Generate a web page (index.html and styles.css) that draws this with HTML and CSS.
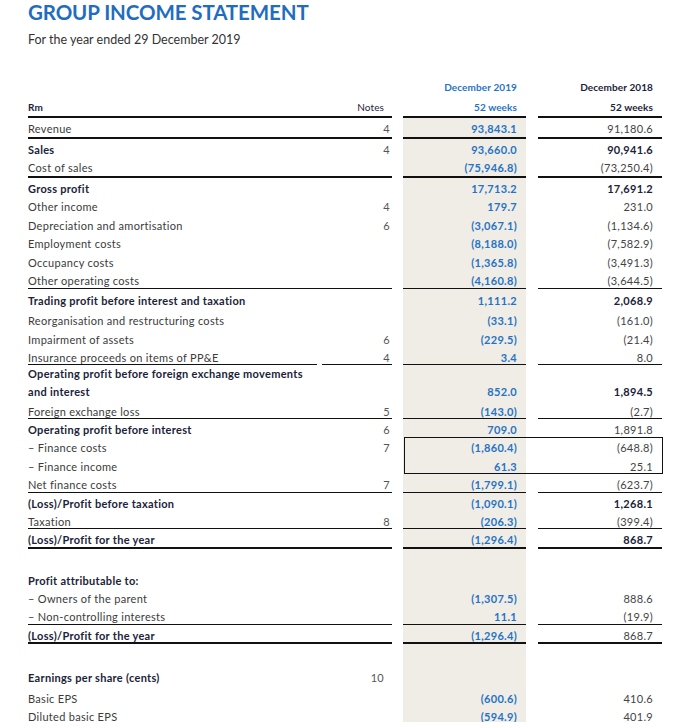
FILE: index.html
```html
<!DOCTYPE html>
<html lang="en">
<head>
<meta charset="utf-8">
<title>Group Income Statement</title>
<link rel="stylesheet" href="styles.css">
</head>
<body>
<div class="page">
  <h1 class="title">GROUP INCOME STATEMENT</h1>
  <p class="sub">For the year ended 29 December 2019</p>

  <div class="stmt">
    <div class="row h1row">
      <div class="lab"></div><div class="note"></div>
      <div class="cur hd">December 2019</div>
      <div class="prev hd">December 2018</div>
    </div>
    <div class="row h2row">
      <div class="lab strong">Rm</div><div class="note hdn">Notes</div>
      <div class="cur hd nobg">52 weeks</div>
      <div class="prev hd">52 weeks</div>
    </div>
    <div class="rule thick"><i class="seg sl"></i><i class="seg sc"></i><i class="seg sp"></i></div>

    <div class="row">
      <div class="lab">Revenue</div><div class="note">4</div>
      <div class="cur">93,843.1</div><div class="prev">91,180.6</div>
    </div>
    <div class="rule thick"><i class="seg sl"></i><i class="seg sc"></i><i class="seg sp"></i></div>
    <div class="row">
      <div class="lab strong">Sales</div><div class="note">4</div>
      <div class="cur">93,660.0</div><div class="prev strong">90,941.6</div>
    </div>
    <div class="row">
      <div class="lab">Cost of sales</div><div class="note"></div>
      <div class="cur">(75,946.8)</div><div class="prev">(73,250.4)</div>
    </div>
    <div class="rule thick"><i class="seg sl"></i><i class="seg sc"></i><i class="seg sp"></i></div>
    <div class="row">
      <div class="lab strong">Gross profit</div><div class="note"></div>
      <div class="cur">17,713.2</div><div class="prev strong">17,691.2</div>
    </div>
    <div class="row">
      <div class="lab">Other income</div><div class="note">4</div>
      <div class="cur">179.7</div><div class="prev">231.0</div>
    </div>
    <div class="row">
      <div class="lab">Depreciation and amortisation</div><div class="note">6</div>
      <div class="cur">(3,067.1)</div><div class="prev">(1,134.6)</div>
    </div>
    <div class="row">
      <div class="lab">Employment costs</div><div class="note"></div>
      <div class="cur">(8,188.0)</div><div class="prev">(7,582.9)</div>
    </div>
    <div class="row">
      <div class="lab">Occupancy costs</div><div class="note"></div>
      <div class="cur">(1,365.8)</div><div class="prev">(3,491.3)</div>
    </div>
    <div class="row pre-thin">
      <div class="lab">Other operating costs</div><div class="note"></div>
      <div class="cur">(4,160.8)</div><div class="prev">(3,644.5)</div>
    </div>
    <div class="rule thin"><i class="seg sl"></i><i class="seg sc"></i><i class="seg sp"></i></div>
    <div class="row trading">
      <div class="lab strong">Trading profit before interest and taxation</div><div class="note"></div>
      <div class="cur">1,111.2</div><div class="prev strong">2,068.9</div>
    </div>
    <div class="row">
      <div class="lab">Reorganisation and restructuring costs</div><div class="note"></div>
      <div class="cur">(33.1)</div><div class="prev">(161.0)</div>
    </div>
    <div class="row">
      <div class="lab">Impairment of assets</div><div class="note">6</div>
      <div class="cur">(229.5)</div><div class="prev">(21.4)</div>
    </div>
    <div class="row ins">
      <div class="lab">Insurance proceeds on items of PP&amp;E</div><div class="note">4</div>
      <div class="cur">3.4</div><div class="prev">8.0</div>
    </div>
    <div class="rule thin"><i class="seg sl1"></i><i class="seg sl2"></i><i class="seg sc"></i><i class="seg sp"></i></div>
    <div class="row tall">
      <div class="lab strong"><span class="two">Operating profit before foreign exchange movements<br>and interest</span></div><div class="note"></div>
      <div class="cur">852.0</div><div class="prev strong">1,894.5</div>
    </div>
    <div class="row pre-thin">
      <div class="lab">Foreign exchange loss</div><div class="note">5</div>
      <div class="cur">(143.0)</div><div class="prev">(2.7)</div>
    </div>
    <div class="rule thin"><i class="seg sl"></i><i class="seg sc"></i><i class="seg sp"></i></div>
    <div class="row opbi">
      <div class="lab strong">Operating profit before interest</div><div class="note">6</div>
      <div class="cur">709.0</div><div class="prev">1,891.8</div>
    </div>
    <div class="boxgrp">
      <div class="row">
        <div class="lab">&ndash; Finance costs</div><div class="note">7</div>
        <div class="cur">(1,860.4)</div><div class="prev">(648.8)</div>
      </div>
      <div class="row">
        <div class="lab">&ndash; Finance income</div><div class="note"></div>
        <div class="cur">61.3</div><div class="prev">25.1</div>
      </div>
      <div class="box"></div>
    </div>
    <div class="row pre-thin">
      <div class="lab">Net finance costs</div><div class="note">7</div>
      <div class="cur">(1,799.1)</div><div class="prev">(623.7)</div>
    </div>
    <div class="rule thin"><i class="seg sl"></i><i class="seg sc"></i><i class="seg sp"></i></div>
    <div class="row r18">
      <div class="lab strong">(Loss)/Profit before taxation</div><div class="note"></div>
      <div class="cur">(1,090.1)</div><div class="prev strong">1,268.1</div>
    </div>
    <div class="row pre-thin">
      <div class="lab">Taxation</div><div class="note">8</div>
      <div class="cur">(206.3)</div><div class="prev">(399.4)</div>
    </div>
    <div class="rule thin"><i class="seg sl"></i><i class="seg sc"></i><i class="seg sp"></i></div>
    <div class="row pre-thin">
      <div class="lab strong">(Loss)/Profit for the year</div><div class="note"></div>
      <div class="cur">(1,296.4)</div><div class="prev strong">868.7</div>
    </div>
    <div class="rule thick"><i class="seg sl"></i><i class="seg sc"></i><i class="seg sp"></i></div>

    <div class="row gap1"><div class="lab"></div><div class="note"></div><div class="cur"></div><div class="prev"></div></div>

    <div class="row pa">
      <div class="lab strong">Profit attributable to:</div><div class="note"></div>
      <div class="cur"></div><div class="prev"></div>
    </div>
    <div class="row">
      <div class="lab">&ndash; Owners of the parent</div><div class="note"></div>
      <div class="cur">(1,307.5)</div><div class="prev">888.6</div>
    </div>
    <div class="row pre-thin">
      <div class="lab">&ndash; Non-controlling interests</div><div class="note"></div>
      <div class="cur">11.1</div><div class="prev">(19.9)</div>
    </div>
    <div class="rule thin"><i class="seg sl"></i><i class="seg sc"></i><i class="seg sp"></i></div>
    <div class="row r17">
      <div class="lab strong">(Loss)/Profit for the year</div><div class="note"></div>
      <div class="cur">(1,296.4)</div><div class="prev">868.7</div>
    </div>
    <div class="rule thick"><i class="seg sl"></i><i class="seg sc"></i><i class="seg sp"></i></div>

    <div class="row gap2"><div class="lab"></div><div class="note"></div><div class="cur"></div><div class="prev"></div></div>

    <div class="row eps">
      <div class="lab strong">Earnings per share (cents)</div><div class="note n10">10</div>
      <div class="cur"></div><div class="prev"></div>
    </div>
    <div class="row basic">
      <div class="lab">Basic EPS</div><div class="note"></div>
      <div class="cur">(600.6)</div><div class="prev">410.6</div>
    </div>
    <div class="row last">
      <div class="lab">Diluted basic EPS</div><div class="note"></div>
      <div class="cur">(594.9)</div><div class="prev">401.9</div>
    </div>
  </div>
</div>
</body>
</html>
```

FILE: styles.css
```css
* { box-sizing: border-box; }

html, body {
  margin: 0;
  padding: 0;
  background: #ffffff;
}

.page {
  width: 675px;
  padding-left: 28px;
  font-family: Lato, "Open Sans", "Liberation Sans", sans-serif;
  color: #3b3b3b;
}

.title {
  margin: 0;
  font-size: 20.5px;
  line-height: 24px;
  font-weight: 700;
  color: #1f6cc0;
  letter-spacing: -0.1px;
}

.sub {
  margin: 8px 0 0 0;
  font-size: 12.5px;
  line-height: 16px;
  color: #333333;
}

.stmt {
  margin-top: 30px;
  width: 634px;
}

.row {
  display: flex;
  height: 18.5px;
  font-size: 11px;
  line-height: 18.5px;
  letter-spacing: 0.3px;
}

.row > div {
  white-space: nowrap;
  padding-top: 2px;
}

.lab {
  width: 294px;
  color: #3b3b3b;
}

.note {
  width: 70px;
  text-align: right;
  padding-right: 2px;
  color: #555555;
}

.cur {
  width: 123px;
  margin-left: 11px;
  background-color: #f0ede7;
  text-align: right;
  padding-right: 9px;
  color: #2673c4;
  font-weight: 700;
}

.prev {
  width: 124px;
  margin-left: 12px;
  text-align: right;
  padding-right: 9px;
  color: #444444;
}

.strong {
  font-weight: 700;
  color: #1b2339;
}

.prev.strong { color: #1b2339; }

/* header rows */
.row.h1row {
  height: 20px;
  line-height: 18px;
  font-size: 10px;
  letter-spacing: 0.1px;
}
.row.h2row {
  height: 18px;
  line-height: 18px;
  font-size: 10px;
  letter-spacing: 0.1px;
}
.row.h1row > div, .row.h2row > div { padding-top: 0; }
.hd {
  font-weight: 700;
  color: #1b2339;
}
.cur.hd { color: #2673c4; }
.row > .nobg, .h1row > .cur { background-color: transparent; }
.hdn {
  color: #1b2339;
  padding-right: 8px;
}

/* horizontal rules */
.rule {
  display: flex;
  width: 634px;
}
.rule.thick { height: 2px; }
.rule.thin { height: 1px; }
.seg {
  display: block;
  height: 100%;
  background-color: #111111;
}
.sl { width: 364px; }
.sl1 { width: 289px; }
.sl2 { width: 70px; margin-left: 5px; }
.sc { width: 123px; margin-left: 11px; }
.sp { width: 124px; margin-left: 12px; }

.row.pre-thin { height: 17.5px; }
.row.ins { height: 17px; }
.row.r18 { height: 18px; }
.row.r17 { height: 17px; }

.row.trading { height: 21.5px; line-height: 19.5px; }

.row.tall {
  height: 35.5px;
  line-height: 18px;
}
.row.tall > div { padding-top: 0; }
.two {
  display: block;
  margin-top: 0;
}
.row.tall > .cur, .row.tall > .prev { padding-top: 17.5px; }

.row.opbi { height: 18px; }

.boxgrp {
  position: relative;
}
.box {
  position: absolute;
  left: 376px;
  top: 0;
  width: 259px;
  height: 37px;
  border: 1px solid #111111;
  pointer-events: none;
}

.row.gap1 { height: 21.5px; }
.row.pa { height: 17.5px; }
.row.gap2 { height: 23.5px; }
.row.eps { height: 20.5px; }
.row.basic { height: 18px; }
.row.last { height: 16.5px; }

.note.n10 { padding-right: 8px; }
```
